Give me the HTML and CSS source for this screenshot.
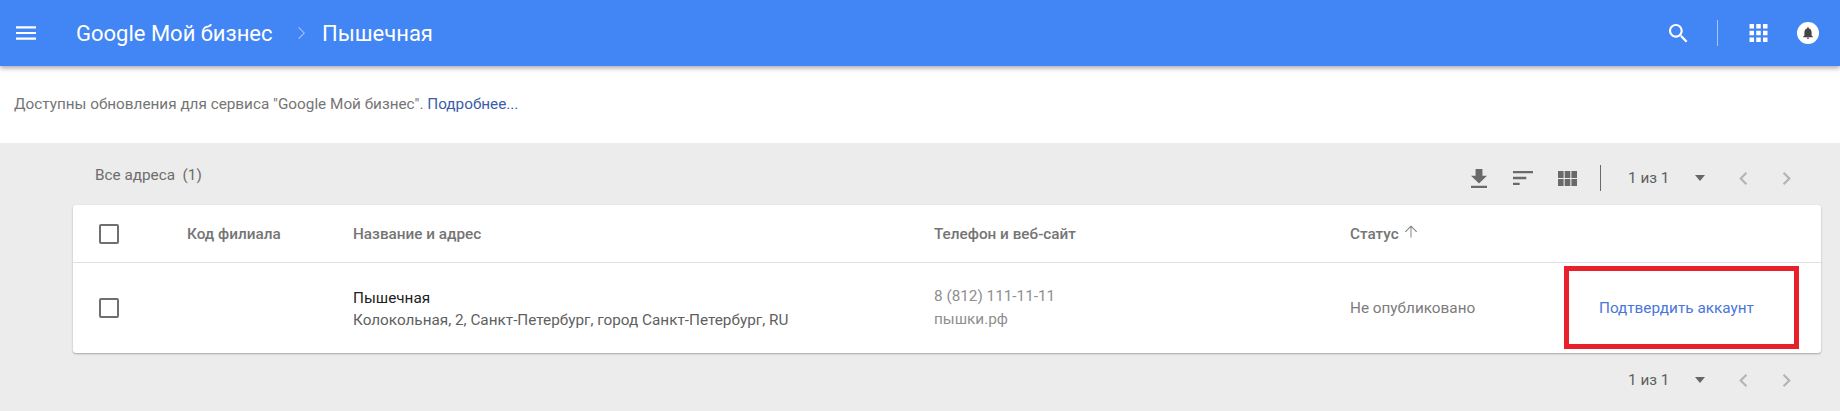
FILE: index.html
```html
<!DOCTYPE html>
<html lang="ru">
  <head>
    <meta charset="UTF-8" />
    <meta name="viewport" content="width=device-width, initial-scale=1.0" />
    <title>Google Мой бизнес</title>
    <link rel="stylesheet" href="styles.css">
  </head>
  <body>
    <!-- шапка -->
    <header class="topbar">
      <svg class="ico menu-ico" viewBox="3 6 18 12"><path d="M3 18h18v-2H3v2zm0-5h18v-2H3v2zm0-7v2h18V6H3z"/></svg>
      <span class="brand">Google Мой бизнес</span>
      <svg class="crumb-ico" viewBox="8 6 8 12"><path d="M10 6L9.3 6.7 14.6 12l-5.3 5.3.7.7 6-6z"/></svg>
      <span class="place">Пышечная</span>
      <div class="topbar-right">
        <svg class="ico search-ico" viewBox="3 3 18 18"><path d="M15.5 14h-.79l-.28-.27C15.41 12.59 16 11.11 16 9.5 16 5.91 13.09 3 9.5 3S3 5.91 3 9.5 5.91 16 9.5 16c1.61 0 3.09-.59 4.23-1.57l.27.28v.79l5 4.99L20.49 19l-4.99-5zm-6 0C7.01 14 5 11.99 5 9.5S7.01 5 9.5 5 14 7.01 14 9.5 11.99 14 9.5 14z"/></svg>
        <i class="topbar-sep"></i>
        <svg class="ico apps-ico" viewBox="4 4 16 16"><path d="M4 8h4V4H4v4zm6 12h4v-4h-4v4zm-6 0h4v-4H4v4zm0-6h4v-4H4v4zm6 0h4v-4h-4v4zm6-10v4h4V4h-4zm-6 4h4V4h-4v4zm6 6h4v-4h-4v4zm0 6h4v-4h-4v4z"/></svg>
        <span class="avatar">
          <svg viewBox="4 2 16 20"><path d="M12 22c1.1 0 2-.9 2-2h-4c0 1.1.9 2 2 2zm6-6v-5c0-3.07-1.63-5.64-4.5-6.32V4c0-.83-.67-1.5-1.5-1.5s-1.5.67-1.5 1.5v.68C7.64 5.36 6 7.92 6 11v5l-2 2v1h16v-1l-2-2z"/></svg>
        </span>
      </div>
    </header>

    <!-- уведомление -->
    <div class="notice">
      Доступны обновления для сервиса "Google Мой бизнес". <a href="#">Подробнее...</a>
    </div>

    <main class="content">
      <div class="toolbar">
        <span class="all-count">Все адреса&nbsp; (1)</span>
        <div class="tools">
          <svg class="tool download-ico" viewBox="5 3 14 17" preserveAspectRatio="none"><path d="M19 9h-4V3H9v6H5l7 7 7-7zM5 18v2h14v-2H5z"/></svg>
          <svg class="tool sort-ico" viewBox="3 6 18 12" preserveAspectRatio="none"><path d="M3 18h6v-2H3v2zM3 6v2h18V6H3zm0 7h12v-2H3v2z"/></svg>
          <svg class="tool grid-ico" viewBox="4 5 17 13" preserveAspectRatio="none"><path d="M4 11h5V5H4v6zm0 7h5v-6H4v6zm6 0h5v-6h-5v6zm6 0h5v-6h-5v6zm-6-7h5V5h-5v6zm6-6v6h5V5h-5z"/></svg>
          <i class="tool-sep"></i>
        </div>
        <div class="pager">
          <span class="pager-text">1 из 1</span>
          <i class="caret"></i>
          <svg class="chev" viewBox="8 6 8 12"><path d="M15.41 7.41L14 6l-6 6 6 6 1.41-1.41L10.83 12z"/></svg>
          <svg class="chev" viewBox="8 6 8 12"><path d="M10 6L8.59 7.41 13.17 12l-4.58 4.59L10 18l6-6z"/></svg>
        </div>
      </div>

      <section class="card">
        <div class="row head">
          <div class="cell-check"><span class="checkbox"></span></div>
          <div>Код филиала</div>
          <div>Название и адрес</div>
          <div>Телефон и веб-сайт</div>
          <div class="status-head">Статус
            <svg class="sort-arrow" viewBox="4 4 16 16"><path d="M4 12l.9.9L11.4 6.4V20h1.2V6.4l6.5 6.5.9-.9-8-8z"/></svg>
          </div>
          <div></div>
        </div>
        <div class="row body">
          <div class="cell-check"><span class="checkbox"></span></div>
          <div></div>
          <div>
            <div class="name">Пышечная</div>
            <div class="address">Колокольная, 2, Санкт-Петербург, город Санкт-Петербург, RU</div>
          </div>
          <div class="contact">
            <div>8 (812) 111-11-11</div>
            <div>пышки.рф</div>
          </div>
          <div class="status">Не опубликовано</div>
          <div><a class="verify" href="#">Подтвердить аккаунт</a></div>
        </div>
        <!-- красная рамка поверх строки -->
        <div class="highlight"></div>
      </section>

      <div class="toolbar bottom">
        <div class="pager">
          <span class="pager-text">1 из 1</span>
          <i class="caret"></i>
          <svg class="chev" viewBox="8 6 8 12"><path d="M15.41 7.41L14 6l-6 6 6 6 1.41-1.41L10.83 12z"/></svg>
          <svg class="chev" viewBox="8 6 8 12"><path d="M10 6L8.59 7.41 13.17 12l-4.58 4.59L10 18l6-6z"/></svg>
        </div>
      </div>
    </main>
  </body>
</html>
```

FILE: styles.css
```css
* {
  margin: 0;
  padding: 0;
  box-sizing: border-box;
}

html,
body {
  height: 411px;
  overflow: hidden;
}

body {
  background-color: #ececec;
  font-family: Roboto, "Liberation Sans", sans-serif;
  font-size: 15.3px;
  color: #757575;
}

a {
  text-decoration: none;
}

i {
  display: block;
}

/* шапка */
.topbar {
  position: relative;
  z-index: 1;
  height: 66px;
  padding-left: 16px;
  display: flex;
  align-items: center;
  background-color: #4285f4;
  color: #fff;
  box-shadow: 0 2px 5px rgba(0, 0, 0, 0.35);
}

.ico {
  display: block;
  fill: #fff;
}

.menu-ico {
  width: 20px;
  height: 14px;
}

.brand {
  width: 198px;
  margin-left: 40px;
  font-size: 22px;
  white-space: nowrap;
}

.crumb-ico {
  width: 8px;
  height: 12px;
  margin-left: 23px;
  fill: #a9c6f9;
}

.place {
  margin-left: 17px;
  font-size: 22px;
}

.topbar-right {
  margin-left: auto;
  padding-right: 21px;
  display: flex;
  align-items: center;
}

.search-ico {
  width: 19px;
  height: 19px;
}

.topbar-sep {
  width: 1px;
  height: 26px;
  margin: 0 31px 0 29px;
  background-color: #a9c6f9;
}

.apps-ico {
  width: 19px;
  height: 18px;
}

.avatar {
  width: 22px;
  height: 22px;
  margin-left: 29px;
  display: flex;
  align-items: center;
  justify-content: center;
  border-radius: 50%;
  background-color: #fff;
}

.avatar svg {
  width: 10px;
  height: 12px;
  fill: #444;
}

/* уведомление */
.notice {
  height: 77px;
  padding-left: 14px;
  line-height: 77px;
  background-color: #fff;
  color: #757575;
}

.notice a {
  color: #3b5ca8;
}

/* панель над таблицей */
.content {
  padding: 0 19px 0 73px;
}

.toolbar {
  height: 62px;
  padding-left: 22px;
  display: flex;
  align-items: center;
}

.all-count {
  margin-top: 2px;
  color: #6d6d6d;
}

.tools {
  margin-top: 8px;
  margin-left: auto;
  display: flex;
  align-items: center;
}

.tool {
  display: block;
  fill: #6a6a6a;
}

.download-ico {
  width: 16px;
  height: 19px;
}

.sort-ico {
  width: 20px;
  height: 14px;
  margin-left: 26px;
}

.grid-ico {
  width: 19px;
  height: 15px;
  margin-left: 25px;
}

.tool-sep {
  width: 1px;
  height: 26px;
  margin-left: 23px;
  background-color: #6a6a6a;
}

.pager {
  width: 193px;
  margin-top: 8px;
  margin-left: 27px;
  display: flex;
  align-items: center;
}

.pager-text {
  width: 40px;
  color: #5f5f5f;
  white-space: nowrap;
}

.caret {
  width: 0;
  height: 0;
  margin-left: 27px;
  border-left: 5.5px solid transparent;
  border-right: 5.5px solid transparent;
  border-top: 6px solid #666;
}

.chev {
  width: 9px;
  height: 13px;
  margin-left: 34px;
  fill: #b4b4b4;
}

.bottom {
  height: 58px;
  justify-content: flex-end;
  padding-bottom: 4px;
}

.bottom .pager {
  margin-top: 0;
}

/* таблица */
.card {
  position: relative;
  height: 148px;
  border-radius: 3px;
  background-color: #fff;
  box-shadow: 0 1px 2px rgba(0, 0, 0, 0.3);
}

.row {
  display: grid;
  grid-template-columns: 114px 166px 581px 416px 249px 1fr;
  align-items: center;
}

.head {
  height: 58px;
  border-bottom: 1px solid #e0e0e0;
  font-weight: 500;
  color: #757575;
}

.body {
  height: 90px;
}

.cell-check {
  padding-left: 26px;
}

.checkbox {
  display: block;
  width: 20px;
  height: 20px;
  border: 2px solid #6f6f6f;
  border-radius: 2px;
}

.status-head {
  display: flex;
  align-items: center;
  gap: 6px;
}

.sort-arrow {
  width: 12px;
  height: 13px;
  margin-top: -4px;
  fill: #757575;
}

.name {
  line-height: 24px;
  color: #212121;
}

.address {
  line-height: 21px;
  color: #5f5f5f;
}

.contact {
  line-height: 23px;
  color: #8f8f8f;
}

.status {
  color: #7c7c7c;
}

.verify {
  color: #4a76d8;
}

.highlight {
  position: absolute;
  left: 1491px;
  top: 61px;
  width: 235px;
  height: 83px;
  border: 5px solid #e8202a;
}
```
